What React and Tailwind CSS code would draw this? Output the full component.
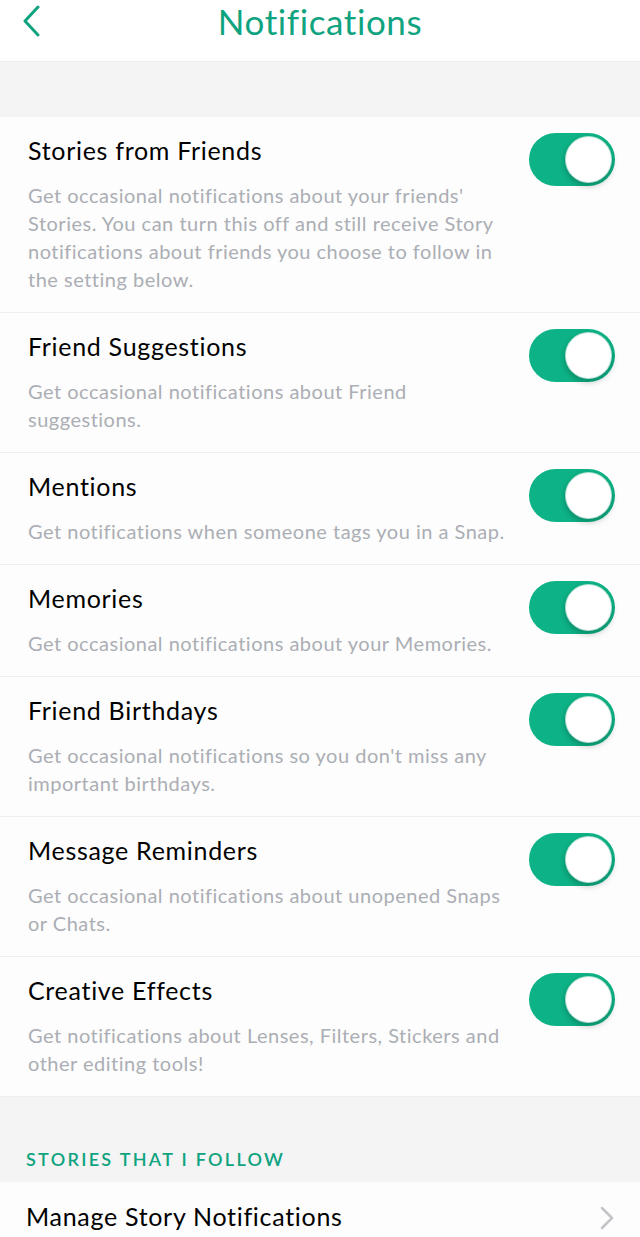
import React, { useState } from "react";

const items = [
  {
    title: "Stories from Friends",
    text: "Get occasional notifications about your friends' Stories. You can turn this off and still receive Story notifications about friends you choose to follow in the setting below.",
  },
  {
    title: "Friend Suggestions",
    text: "Get occasional notifications about Friend suggestions.",
  },
  {
    title: "Mentions",
    text: "Get notifications when someone tags you in a Snap.",
  },
  {
    title: "Memories",
    text: "Get occasional notifications about your Memories.",
  },
  {
    title: "Friend Birthdays",
    text: "Get occasional notifications so you don't miss any important birthdays.",
  },
  {
    title: "Message Reminders",
    text: "Get occasional notifications about unopened Snaps or Chats.",
  },
  {
    title: "Creative Effects",
    text: "Get notifications about Lenses, Filters, Stickers and other editing tools!",
  },
];

function Toggle({ on, onChange }) {
  return (
    <button
      onClick={onChange}
      className={`relative flex h-[53px] w-[86px] shrink-0 items-center rounded-full ${
        on ? "bg-[#0db386]" : "bg-[#e5e5ea]"
      }`}
    >
      <span
        className={`absolute top-[3px] h-[47px] w-[47px] rounded-full border border-[#0a9c74]/30 bg-white shadow-[0_3px_6px_rgba(0,0,0,0.25)] ${
          on ? "right-[3px]" : "left-[3px]"
        }`}
      ></span>
    </button>
  );
}

function Row({ item, on, onToggle }) {
  return (
    <div className="flex border-b border-[#efefef] bg-[#fdfdfd] pb-[19px] pl-[28px] pr-[25px] pt-4">
      <div className="w-[488px]">
        <div className="text-[25px] leading-[34px] tracking-[0.7px] text-black">
          {item.title}
        </div>
        <div className="mt-[14px] text-[20px] leading-[28px] tracking-[0.5px] text-[#abaeb4]">
          {item.text}
        </div>
      </div>
      <div className="ml-auto">
        <Toggle on={on} onChange={onToggle} />
      </div>
    </div>
  );
}

export default function App() {
  const [toggles, setToggles] = useState(items.map(() => true));

  const flip = (i) => {
    setToggles(toggles.map((v, j) => (j === i ? !v : v)));
  };

  return (
    <div className="min-h-[1237px] w-[640px] overflow-hidden bg-black font-['Lato',sans-serif]">
      <div className="min-h-[1237px] rounded-tl-[4px_22px] rounded-tr-[4px_22px] bg-[#f4f4f4]">
        <div className="relative flex h-[62px] items-start justify-center border-b border-[#ececec] bg-white">
          <button className="absolute left-[22px] top-[5px]">
            <svg width="20" height="32" viewBox="0 0 20 32">
              <path
                d="M16 2 L3 16 L16 30"
                fill="none"
                stroke="#0fa37f"
                strokeWidth="3"
                strokeLinecap="round"
                strokeLinejoin="round"
              />
            </svg>
          </button>
          <div className="text-[35px] leading-[42px] tracking-[0.6px] text-[#0fa37f]">
            Notifications
          </div>
        </div>

        <div className="h-[55px]"></div>

        {items.map((item, i) => (
          <Row
            key={item.title}
            item={item}
            on={toggles[i]}
            onToggle={() => flip(i)}
          />
        ))}

        <div className="flex h-[85px] items-end pb-[11px] pl-[26px]">
          <div className="text-[18px] font-semibold uppercase leading-[24px] tracking-[2.3px] text-[#0fa37f]">
            Stories that I follow
          </div>
        </div>

        <div className="flex h-[70px] items-start justify-between bg-[#fdfdfd] pl-[26px] pr-[26px] pt-[17px]">
          <div className="text-[25px] leading-[34px] tracking-[0.7px] text-black">
            Manage Story Notifications
          </div>
          <svg className="mt-[7px]" width="14" height="24" viewBox="0 0 14 24">
            <path
              d="M2 2 L12 12 L2 22"
              fill="none"
              stroke="#c4c4c8"
              strokeWidth="2.5"
              strokeLinecap="round"
              strokeLinejoin="round"
            />
          </svg>
        </div>
      </div>
    </div>
  );
}
